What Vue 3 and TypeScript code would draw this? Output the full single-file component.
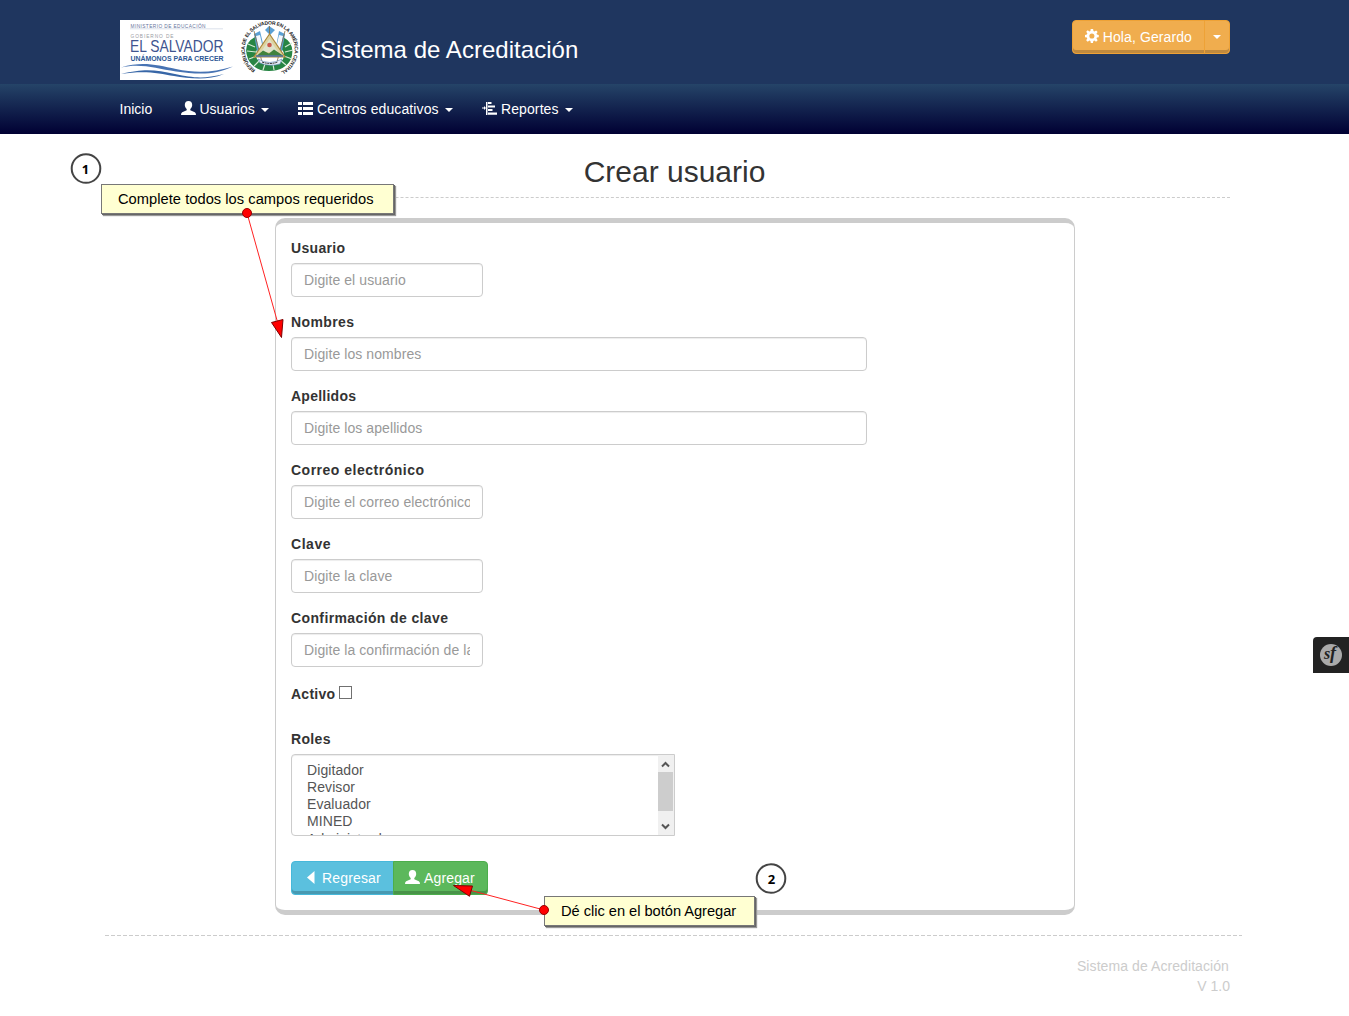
<script setup lang="ts">
interface Field {
  id: string
  label: string
  placeholder: string
  wide: boolean
  labelWidth: number
}

const fields: Field[] = [
  { id: 'usuario', label: 'Usuario', placeholder: 'Digite el usuario', wide: false, labelWidth: 54 },
  { id: 'nombres', label: 'Nombres', placeholder: 'Digite los nombres', wide: true, labelWidth: 63 },
  { id: 'apellidos', label: 'Apellidos', placeholder: 'Digite los apellidos', wide: true, labelWidth: 65 },
  { id: 'correo', label: 'Correo electrónico', placeholder: 'Digite el correo electrónico', wide: false, labelWidth: 133 },
  { id: 'clave', label: 'Clave', placeholder: 'Digite la clave', wide: false, labelWidth: 39.5 },
  { id: 'confirmacion', label: 'Confirmación de clave', placeholder: 'Digite la confirmación de la clave', wide: false, labelWidth: 157 },
]

const roles: string[] = ['Digitador', 'Revisor', 'Evaluador', 'MINED', 'Administrador']
</script>

<template>
  <div class="page">
    <header class="top">
      <div class="brand">
        <svg class="logo" width="180" height="60" viewBox="0 0 180 60">
          <rect width="180" height="60" fill="#fff" />
          <g font-family="Liberation Sans, sans-serif">
            <text x="10.500" y="8.200" font-size="4.800" fill="#66739b" textLength="75" lengthAdjust="spacing">MINISTERIO DE EDUCACIÓN</text>
            <text x="10.500" y="18.300" font-size="4.800" fill="#9a9ca4" textLength="43" lengthAdjust="spacing">GOBIERNO DE</text>
            <text x="10" y="32" font-size="17" fill="#40548f" textLength="93.500" lengthAdjust="spacingAndGlyphs">EL SALVADOR</text>
            <text x="10.500" y="41" font-size="6.300" font-weight="bold" fill="#2d5795" textLength="93" lengthAdjust="spacingAndGlyphs">UNÁMONOS PARA CRECER</text>
          </g>
          <path d="M10 8.800H103" stroke="#c3cbdc" stroke-width=".6" />
          <path d="M1 47.500C22 41 37 45 56 49S92 53 113 46.500C94 56 76 54 56 51.500S22 43 1 47.500Z" fill="#4773b3" />
          <path d="M1 54C25 48 36 50 55 54S84 59 104 54C87 61 69 58.500 54 56S25 50 1 54Z" fill="#3766a7" />
          <g>
            <path d="M135 17Q122 24 128 39Q134 51 149 51Q165 51 171 39Q176 24 163 17L161 28Q167 35 161 42Q150 48 139 42Q133 35 138 28Z" fill="#278543" />
            <path d="M128 24l7 3m-8 4l9 1m-7 7l8-3m-3 10l6-6m32-17l-7 4m8 3l-8 2m7 7l-8-3m2 9l-6-5M143 50l2-6m9 6l-1-6" stroke="#d5ead5" stroke-width="1.200" />
            <path d="M134 14L140 11 145 32 138 37ZM165 14L159 11 155 32 161 37ZM145 10l4-4 6 4-5 5Z" fill="#5ba0d4" />
            <path d="M136 16l4-1 4 18-4 2ZM163 16l-4-1-4 18 4 2Z" fill="#f4f8fc" />
            <path d="M134 11L142 42M165 11L157 42M149.500 6V15" stroke="#84683d" stroke-width=".8" />
            <path d="M149.500 14L165 37H134Z" fill="#ddd3a0" stroke="#ad883b" stroke-width="1.200" />
            <path d="M149.500 19L158 32H141Z" fill="#dfe3cc" />
            <circle cx="149.500" cy="25" r="2.300" fill="#c9574b" />
            <path d="M137 35.500l6-5 6 3 5-4 9 6Z" fill="#40823d" />
            <path d="M136 36H163" stroke="#315ca0" stroke-width="1.300" />
            <path d="M138 39Q149.500 46 162 39L160 44Q149.500 47 140 43Z" fill="#e9eef6" stroke="#5681b3" stroke-width=".6" />
            <path d="M142 42Q150 45 158 42" fill="none" stroke="#333" stroke-width="1" stroke-dasharray="2 .7" />
          </g>
          <defs>
            <path id="sealCircle" d="M135.500 50A25 25 0 1 1 160 52.200" />
          </defs>
          <text font-family="Liberation Sans, sans-serif" font-size="5" font-weight="bold" fill="#222">
            <textPath href="#sealCircle" textLength="130">REPÚBLICA DE EL SALVADOR EN LA AMÉRICA CENTRAL</textPath>
          </text>
        </svg>
        <span class="brand-name">Sistema de Acreditación</span>
      </div>
      <div class="user-group">
        <button class="btn warning first" type="button">
          <svg class="gear" width="14" height="14" viewBox="0 0 14 14">
            <path fill="#fff" fill-rule="evenodd" d="M5.800 0H8.200L8.600 2 9.700 2.500 11.300 1.300 12.900 2.900 11.700 4.500 12.100 5.600 14 6V8.200L12.100 8.600 11.700 9.600 12.900 11.200 11.200 12.800 9.600 11.600 8.500 12.100 8.100 14H5.900L5.500 12.100 4.400 11.600 2.800 12.800 1.200 11.200 2.300 9.600 1.900 8.500 0 8.200V5.900L1.900 5.500 2.400 4.400 1.200 2.800 2.800 1.200 4.400 2.400 5.500 1.900ZM7 4.400A2.600 2.600 0 1 0 7 9.600A2.600 2.600 0 1 0 7 4.400Z" />
          </svg>
          <span>Hola, Gerardo</span>
        </button>
        <button class="btn warning last" type="button" aria-label="Menú"><i class="caret"></i></button>
      </div>
    </header>

    <nav class="menu">
      <a class="item inicio">Inicio</a>
      <a class="item usuarios">
        <svg width="15" height="14" viewBox="0 0 15 14"><path fill="#fff" d="M7.500 0C9.900 0 11.300 1.600 11.200 4.100C11.100 6 10.400 7.200 9.300 8V9.200L13.800 11.300Q15 11.900 15 13.900H0Q0 11.900 1.200 11.300L5.700 9.200V8C4.600 7.200 3.900 6 3.800 4.100C3.700 1.600 5.100 0 7.500 0Z" /></svg>
        <span>Usuarios</span><i class="caret"></i>
      </a>
      <a class="item centros">
        <svg width="15" height="13" viewBox="0 0 15 13"><path fill="#fff" d="M0 0H4V3H0ZM5 0H15V3H5ZM0 5H4V8H0ZM5 5H15V8H5ZM0 10H4V13H0ZM5 10H15V13H5Z" /></svg>
        <span>Centros educativos</span><i class="caret"></i>
      </a>
      <a class="item reportes">
        <svg width="15" height="14" viewBox="0 0 15 14"><path fill="#fff" d="M4 1H5.500V14H4ZM6 1H9.500V3H6ZM6 4.500H13V6.500H6ZM6 8H10.500V10H6ZM6 11.500H15V13.700H6ZM0 6.500H2V5L4 7 2 9V7.500H0Z" /></svg>
        <span>Reportes</span><i class="caret"></i>
      </a>
    </nav>

    <main>
      <h1>Crear usuario</h1>
      <form class="panel" @submit.prevent>
        <div v-for="field in fields" :key="field.id" class="group">
          <label :for="field.id">
            <svg :width="field.labelWidth + 2" height="20"><text x="0" y="15" :textLength="field.labelWidth">{{ field.label }}</text></svg>
          </label>
          <input :id="field.id" class="control" :class="{ wide: field.wide }" type="text" :placeholder="field.placeholder" />
        </div>
        <div class="active-row">
          <svg width="46" height="20"><text x="0" y="15" textLength="44">Activo</text></svg>
          <span class="check" role="checkbox" aria-checked="false"></span>
        </div>
        <div class="group roles">
          <label><svg width="42" height="20"><text x="0" y="15" textLength="39.500">Roles</text></svg></label>
          <div class="listbox">
            <div class="options">
              <div v-for="role in roles" :key="role">{{ role }}</div>
            </div>
            <div class="scroll">
              <svg width="15" height="17" viewBox="0 0 15 17"><path d="M4 11.500L7.500 8 11 11.500" fill="none" stroke="#555" stroke-width="2" /></svg>
              <div class="thumb"></div>
              <svg width="15" height="17" viewBox="0 0 15 17"><path d="M4 6.500L7.500 10 11 6.500" fill="none" stroke="#555" stroke-width="2" /></svg>
            </div>
          </div>
        </div>
        <div class="actions">
          <button class="btn info first" type="button">
            <svg width="8" height="13" viewBox="0 0 8 13"><path d="M7.500 0V13L0 6.500Z" fill="#fff" /></svg>
            <span>Regresar</span>
          </button>
          <button class="btn success last" type="submit">
            <svg width="15" height="14" viewBox="0 0 15 14"><path fill="#fff" d="M7.500 0C9.900 0 11.300 1.600 11.200 4.100C11.100 6 10.400 7.200 9.300 8V9.200L13.800 11.300Q15 11.900 15 13.900H0Q0 11.900 1.200 11.300L5.700 9.200V8C4.600 7.200 3.900 6 3.800 4.100C3.700 1.600 5.100 0 7.500 0Z" /></svg>
            <span>Agregar</span>
          </button>
        </div>
      </form>
    </main>

    <footer>
      <svg class="rule" width="1137" height="1"><path d="M0 .5H1137" stroke="#ccc" stroke-dasharray="4 2" /></svg>
      <p class="f1">Sistema de Acreditación</p>
      <p class="f2">V 1.0</p>
    </footer>

    <div class="note note-a"><span>Complete todos los campos requeridos</span></div>
    <div class="note note-b"><span>Dé clic en el botón Agregar</span></div>
    <svg class="overlay" width="1349" height="1016">
      <g stroke-width="1">
        <path d="M247 213L277.500 322M544 910L471 890.500" stroke="#f22" />
        <path d="M271.500 322.500L283 319.500 281.500 337.500ZM453.500 885.500L472.500 886 469.500 896.300Z" fill="#f00" stroke="#800000" />
        <circle cx="247" cy="213" r="4.500" fill="#f00" stroke="#900" />
        <circle cx="544" cy="910" r="4.500" fill="#f00" stroke="#900" />
      </g>
      <g fill="#fff" stroke="#444" stroke-width="2">
        <circle cx="86" cy="168.500" r="14.300" />
        <circle cx="771" cy="878.500" r="14.300" />
      </g>
      <g class="step">
        <text x="85.500" y="174" text-anchor="middle">1</text>
        <text x="771.500" y="884" text-anchor="middle">2</text>
      </g>
    </svg>
    <div class="toolbar">
      <svg width="24" height="24" viewBox="0 0 24 24">
        <circle cx="12" cy="12" r="11" fill="#aaa" />
        <text x="5" y="16" font-family="Liberation Serif, serif" font-size="16" font-style="italic" font-weight="bold" fill="#222">s</text>
        <text x="11" y="16" font-family="Liberation Serif, serif" font-size="18" font-style="italic" font-weight="bold" fill="#222">f</text>
      </svg>
    </div>
  </div>
</template>

<style>
body { margin: 0; background: #fff; overflow: hidden; }
</style>

<style scoped>
* { box-sizing: border-box; }
.page { position: relative; width: 1349px; height: 1016px; overflow: hidden; font: 14px/20px "Liberation Sans", Arial, sans-serif; color: #333; }
.top { height: 84px; padding: 20px 119px 0 120px; display: flex; justify-content: space-between; background: #1f365f; }
.brand { display: flex; height: 60px; align-items: center; color: #fff; }
.brand-name { margin-left: 20px; font-size: 24px; letter-spacing: .04px; white-space: nowrap; }
.user-group, .actions { display: flex; }
.btn { height: 34px; font: inherit; display: flex; align-items: center; border: 1px solid; padding: 0 12px; color: #fff; box-shadow: inset 0 -3px rgba(0,0,0,.2); white-space: nowrap; }
.btn.first { border-radius: 4px 0 0 4px; }
.btn.last { border-radius: 0 4px 4px 0; margin-left: -1px; }
.warning { background: #f0ad4e; border-color: #eea236; }
.warning.first { width: 133px; }
.warning.first span { margin-left: 4px; letter-spacing: .1px; }
.warning.last { width: 26px; padding: 0 8px; }
.gear { margin-top: -2px; }
.caret { width: 0; height: 0; flex: none; border: 4px solid transparent; border-top-color: #fff; border-bottom: 0; }
.menu { height: 50px; padding-left: 119.5px; display: flex; align-items: center; color: #fff; background: linear-gradient(#254468, #000033); }
.item { display: flex; align-items: center; white-space: nowrap; }
.item .caret { margin: 2px 0 0 6px; }
.item span { margin-left: 4px; }
.item svg { flex: none; margin-top: -2px; }
.inicio { width: 61.5px; }
.usuarios { width: 117px; }
.usuarios span { margin-left: 3.5px; }
.centros { width: 184px; }
.centros span, .reportes span { letter-spacing: .1px; }
main { width: 1110px; margin-left: 120px; }
h1 { margin: 0 0 20px; height: 64px; padding: 21px 1px 0 0; font-size: 30px; line-height: 33px; font-weight: 400; text-align: center; border-bottom: 1px dashed #ccc; }
.panel { width: 800px; height: 697px; margin-left: 155px; padding: 15px; border: 1px solid #ccc; border-width: 5px 1px; border-radius: 10px; }
.group { height: 74px; }
.group label { display: block; height: 20px; margin-bottom: 5px; }
svg { display: block; }
.group label text, .active-row text { font-weight: bold; fill: #333; }
.control { display: block; width: 192px; height: 34px; padding: 6px 12px; border: 1px solid #ccc; border-radius: 4px; box-shadow: inset 0 1px 1px rgba(0,0,0,.075); font: inherit; letter-spacing: .08px; color: #555; outline: none; }
.control.wide { width: 576px; }
.control::placeholder { color: #999; opacity: 1; }
.active-row { display: flex; height: 47px; padding-top: 2px; }
.check { width: 13px; height: 13px; margin: 2px 0 0 2px; border: 1px solid #707070; background: #fff; }
.group.roles { height: 132px; }
.listbox { width: 384px; height: 82px; display: flex; justify-content: space-between; border: 1px solid #ccc; border-radius: 4px 0 0 4px; box-shadow: inset 0 1px 1px rgba(0,0,0,.075); overflow: hidden; }
.options { padding: 7px 0 0 15px; line-height: 17px; letter-spacing: .08px; color: #555; }
.options div:last-child { padding-top: 1px; }
.scroll { width: 16px; height: 80px; background: #f0f0f0; display: flex; flex-direction: column; }
.thumb { width: 15px; height: 39px; margin-bottom: 7px; background: #cdcdcd; }
.info { width: 103px; background: #5bc0de; border-color: #46b8da; padding-left: 15px; }
.info span { margin-left: 7px; letter-spacing: .15px; }
.info svg, .success svg { margin-top: -2px; }
.success { width: 95px; padding-left: 11px; background: #5cb85c; border-color: #4cae4c; }
.success span { margin-left: 4px; letter-spacing: .15px; }
footer { margin: 20px 119px 0 105px; color: #ccc; text-align: right; }
footer p { margin: 0; }
.f1 { padding: 20px 1px 0 0; letter-spacing: .08px; }
.note { position: absolute; height: 30px; padding: 0 16px; background: #ffffd2; border: 1px solid #777; box-shadow: 1px 1px 0 #666, 2px 2px 1px #999; color: #000; font-size: 14.67px; line-height: 28px; white-space: nowrap; }
.note-a { left: 101px; top: 184px; width: 293px; letter-spacing: .04px; }
.note-b { left: 544px; top: 896px; width: 211px; letter-spacing: -.03px; }
.overlay { position: absolute; left: 0; top: 0; pointer-events: none; }
.step text { font: bold 13px "Open Sans", "Noto Sans", sans-serif; fill: #000; }
.toolbar { position: absolute; left: 1313px; top: 637px; width: 36px; height: 36px; padding: 6px; background: #222; border-radius: 4px 0 0 0; }
</style>
